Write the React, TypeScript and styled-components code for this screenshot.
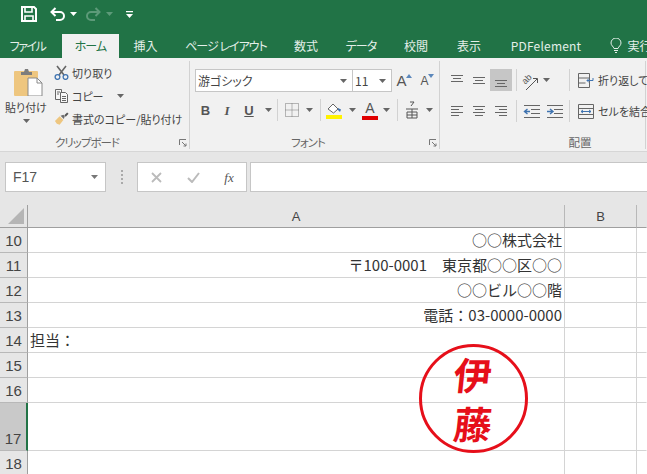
import React from 'react';
import styled, { createGlobalStyle } from 'styled-components';

const GlobalStyle = createGlobalStyle`
	html, body {
		margin: 0;
		padding: 0;
		background: #fff;
	}
	body {
		width: 647px;
		height: 474px;
		overflow: hidden;
		font-family: 'Noto Sans CJK JP', 'Noto Sans', sans-serif;
		color: #444;
	}
`;

const Window = styled.div`
	width: 647px;
	height: 474px;
	overflow: hidden;
	display: flex;
	flex-direction: column;
`;

// ---- title bar + tabs
const QuickBar = styled.div`
	height: 34px;
	background: #217346;
	display: flex;
	align-items: center;
	padding-left: 21px;
	padding-bottom: 6px;
	box-sizing: border-box;
`;

const QuickItem = styled.div<{ $w: number }>`
	width: ${({ $w }) => $w}px;
	display: flex;
	align-items: center;
	flex: none;
`;

const TabBar = styled.div`
	height: 24px;
	background: #217346;
	display: flex;
`;

const Tab = styled.div<{ $w: number; $active?: boolean; $gap?: number; $ls?: number }>`
	width: ${({ $w }) => $w}px;
	margin-left: ${({ $gap }) => $gap || 0}px;
	flex: none;
	display: flex;
	align-items: center;
	justify-content: center;
	gap: 5px;
	font-size: 12px;
	font-feature-settings: 'palt' 1;
	letter-spacing: ${({ $ls }) => $ls || 0}px;
	padding-bottom: 2px;
	box-sizing: border-box;
	white-space: nowrap;
	color: ${({ $active }) => ($active ? '#217346' : '#e4efe9')};
	background: ${({ $active }) => ($active ? '#f1f1f1' : 'transparent')};
`;

// ---- ribbon
const Ribbon = styled.div`
	height: 94px;
	background: #f1f1f1;
	display: flex;
	border-bottom: 1px solid #d6d6d6;
	box-sizing: border-box;
`;

const Group = styled.div<{ $w: number }>`
	width: ${({ $w }) => $w}px;
	flex: none;
	display: flex;
	flex-direction: column;
	position: relative;
	box-sizing: border-box;
`;

const GroupBody = styled.div`
	flex: 1;
	display: flex;
	margin-right: 1px;
	margin-top: 3px;
	margin-bottom: 2px;
	border-right: 1px solid #d2d2d2;
`;

const GroupLabel = styled.div<{ $l?: number; $r?: number; $ls?: number }>`
	position: absolute;
	left: ${({ $l }) => $l || 0}px;
	right: ${({ $r }) => $r || 0}px;
	bottom: 1px;
	height: 16px;
	line-height: 16px;
	font-size: 11.5px;
	font-feature-settings: 'palt' 1;
	letter-spacing: ${({ $ls }) => $ls || 0}px;
	color: #666;
	text-align: center;
`;

const Launcher = styled.svg`
	position: absolute;
	right: 4px;
	bottom: 4px;
`;

const PasteColumn = styled.div`
	width: 54px;
	padding-left: 5px;
	box-sizing: border-box;
	display: flex;
	flex-direction: column;
	align-items: flex-start;
`;

const PasteText = styled.div`
	font-size: 11px;
	font-feature-settings: 'palt' 1;
	color: #444;
	line-height: 14px;
	margin-top: 4px;
	white-space: nowrap;
`;

const Nudge = styled.div<{ $ml?: number; $mt?: number }>`
	margin-left: ${({ $ml }) => $ml || 0}px;
	margin-top: ${({ $mt }) => $mt || 0}px;
	display: flex;
	flex: none;
`;

const SmallColumn = styled.div`
	display: flex;
	flex-direction: column;
`;

const SmallRow = styled.div`
	height: 23px;
	display: flex;
	align-items: center;
	gap: 3px;
	font-size: 11px;
	font-feature-settings: 'palt' 1;
	color: #444;
	white-space: nowrap;
`;

const FontColumn = styled.div`
	display: flex;
	flex-direction: column;
	padding: 8px 0 0 4px;
`;

const ToolRow = styled.div<{ $mt?: number }>`
	display: flex;
	align-items: center;
	margin-top: ${({ $mt }) => $mt || 0}px;
`;

const SelectBox = styled.div<{ $w: number }>`
	width: ${({ $w }) => $w}px;
	height: 23px;
	background: #fff;
	border: 1px solid #c6c6c6;
	box-sizing: border-box;
	margin-right: -1px;
	padding: 0 5px 0 2px;
	display: flex;
	align-items: center;
	justify-content: space-between;
	font-size: 12px;
	font-feature-settings: 'palt' 1;
	color: #444;
`;

const Tool = styled.div<{ $w: number; $on?: boolean }>`
	width: ${({ $w }) => $w}px;
	height: 22px;
	flex: none;
	display: flex;
	align-items: center;
	justify-content: center;
	background: ${({ $on }) => ($on ? '#c6c6c6' : 'transparent')};
`;

const Letter = styled.span<{ $size?: number; $italic?: boolean; $under?: boolean; $serif?: boolean; $light?: boolean }>`
	font-family: ${({ $serif }) => ($serif ? "'Liberation Serif', serif" : "'Liberation Sans', sans-serif")};
	font-size: ${({ $size }) => $size || 13}px;
	font-weight: ${({ $light }) => ($light ? 400 : 700)};
	font-style: ${({ $italic }) => ($italic ? 'italic' : 'normal')};
	text-decoration: ${({ $under }) => ($under ? 'underline' : 'none')};
	color: #555;
	line-height: 1;
`;

const SizeTriangle = styled.svg`
	align-self: flex-start;
	margin-top: 4px;
	margin-left: -1px;
`;

const ToolSep = styled.div`
	width: 1px;
	height: 22px;
	background: #d2d2d2;
	flex: none;
`;

const WrapText = styled.div`
	font-size: 11px;
	font-feature-settings: 'palt' 1;
	color: #444;
	margin-left: 4px;
	white-space: nowrap;
`;

// ---- formula bar
const FormulaBar = styled.div`
	height: 53px;
	background: #e6e6e6;
	padding: 10px 0 0 5px;
	box-sizing: border-box;
	display: flex;
	align-items: flex-start;
`;

const NameBox = styled.div`
	width: 101px;
	height: 30px;
	background: #fff;
	border: 1px solid #c6c6c6;
	box-sizing: border-box;
	display: flex;
	align-items: center;
	justify-content: space-between;
	padding: 0 7px 0 7px;
	font-size: 14px;
	color: #555;
	font-family: 'Liberation Sans', sans-serif;
`;

const Dots = styled.div`
	width: 31px;
	height: 30px;
	flex: none;
	display: flex;
	flex-direction: column;
	align-items: center;
	justify-content: center;
	gap: 2px;
	& > i {
		width: 2px;
		height: 2px;
		background: #aaa;
	}
`;

const FxBox = styled.div`
	width: 110px;
	height: 30px;
	background: #fff;
	border: 1px solid #c6c6c6;
	box-sizing: border-box;
	display: flex;
	align-items: center;
	flex: none;
	margin-right: 3px;
`;

const FormulaInput = styled.div`
	flex: 1;
	height: 30px;
	background: #fff;
	border: 1px solid #c6c6c6;
	border-right: none;
	box-sizing: border-box;
`;

// ---- sheet
const Sheet = styled.div`
	position: relative;
	flex: 1;
	display: grid;
	grid-template-columns: 28px 537px 72px 1fr;
	grid-auto-rows: min-content;
	background: #fff;
	overflow: hidden;
`;

const Corner = styled.div`
	height: 23px;
	background: #e6e6e6;
	border-right: 1px solid #9f9f9f;
	border-bottom: 1px solid #9f9f9f;
	box-sizing: border-box;
	position: relative;
`;

const CornerMark = styled.div`
	position: absolute;
	right: 3px;
	bottom: 3px;
	width: 0;
	height: 0;
	border-left: 16px solid transparent;
	border-bottom: 16px solid #b5b5b5;
`;

const ColHead = styled.div<{ $blank?: boolean }>`
	height: 23px;
	background: #e6e6e6;
	border-right: 1px solid ${({ $blank }) => ($blank ? 'transparent' : '#b8b8b8')};
	border-bottom: 1px solid #9f9f9f;
	box-sizing: border-box;
	display: flex;
	align-items: center;
	justify-content: center;
	font-family: 'Liberation Sans', sans-serif;
	font-size: 13px;
	color: #444;
`;

const RowHead = styled.div<{ $h: number; $selected?: boolean }>`
	height: ${({ $h }) => $h}px;
	background: ${({ $selected }) => ($selected ? '#c9c9c9' : '#e6e6e6')};
	border-right: ${({ $selected }) => ($selected ? '2px solid #217346' : '1px solid #9f9f9f')};
	border-bottom: 1px solid #b8b8b8;
	box-sizing: border-box;
	display: flex;
	align-items: flex-end;
	justify-content: center;
	font-family: 'Liberation Sans', sans-serif;
	font-size: 15px;
	line-height: 23px;
	color: #444;
`;

const Cell = styled.div<{ $h: number; $right?: boolean; $noRight?: boolean }>`
	height: ${({ $h }) => $h}px;
	border-right: 1px solid ${({ $noRight }) => ($noRight ? 'transparent' : '#d4d4d4')};
	border-bottom: 1px solid #d4d4d4;
	box-sizing: border-box;
	display: flex;
	align-items: flex-end;
	justify-content: ${({ $right }) => ($right ? 'flex-end' : 'flex-start')};
	padding: 0 2px 1px;
	font-size: 15px;
	line-height: 23px;
	color: #333;
	white-space: pre;
`;

// stamp sits over the grid, lines show through it
const Stamp = styled.div`
	position: absolute;
	left: 419px;
	top: 139px;
	width: 109px;
	height: 109px;
	border: 3px solid #e60f1a;
	border-radius: 50%;
	box-sizing: border-box;
	display: flex;
	flex-direction: column;
	align-items: center;
	justify-content: center;
	gap: 11px;
`;

const StampChar = styled.div`
	font-size: 38px;
	font-weight: 700;
	line-height: 38px;
	color: #e60f1a;
	font-family: 'Noto Sans CJK JP', sans-serif;
	transform: skewX(-6deg);
`;

const Caret = ({ c = '#666' }: { c?: string }) => (
	<svg width="7" height="4" viewBox="0 0 7 4">
		<path d="M0 0h7L3.5 4z" fill={c} />
	</svg>
);

const SaveIcon = () => (
	<svg width="16" height="16" viewBox="0 0 16 16" fill="none" stroke="#fff" strokeWidth="2">
		<path d="M1 1h12l2 2v12H1z" />
		<path d="M4 1v5h7V1M4 15V10h8v5" strokeWidth="1.6" />
	</svg>
);

const UndoIcon = ({ c }: { c: string }) => (
	<svg width="16" height="14" viewBox="0 0 16 14" fill="none" stroke={c} strokeWidth="2">
		<path d="M1.5 5H10a4 4 0 0 1 0 8H6" />
		<path d="M5.5 1L1.500 5l4 4" />
	</svg>
);

const RedoIcon = ({ c }: { c: string }) => (
	<svg width="16" height="14" viewBox="0 0 16 14" fill="none" stroke={c} strokeWidth="2">
		<path d="M14.5 5H6a4 4 0 0 0 0 8h4" />
		<path d="M10.5 1l4 4-4 4" />
	</svg>
);

const CustomizeIcon = () => (
	<svg width="7" height="7" viewBox="0 0 7 7">
		<path d="M0 0h7v1.2H0zM0 3h7L3.5 7z" fill="#fff" />
	</svg>
);

const BulbIcon = () => (
	<svg width="12" height="15" viewBox="0 0 12 15" fill="none" stroke="#e4efe9" strokeWidth="1">
		<path d="M4 10.5C3.5 8.5 1 7.5 1 5a5 5 0 0 1 10 0c0 2.5-2.5 3.500-3 5.500zM4 12.500h4M5 14.500h2" />
	</svg>
);

const PasteIcon = () => (
	<svg width="30" height="28" viewBox="0 0 30 28">
		<rect x="0" y="3" width="24" height="25" rx="1" fill="#eec67f" />
		<path d="M7 4h3l1-3h3l1 3h3v3H7z" fill="#7d7d7d" />
		<path d="M14 10h9l5 5v13H14z" fill="#fff" stroke="#8a8a8a" />
		<path d="M23 10v5h5" fill="none" stroke="#8a8a8a" />
	</svg>
);

const ScissorsIcon = () => (
	<svg width="15" height="15" viewBox="0 0 15 15" fill="none">
		<path d="M3 1l7 9M12 1l-7 9" stroke="#666" strokeWidth="1.6" />
		<circle cx="3.500" cy="12" r="2.400" stroke="#3f73b0" strokeWidth="1.300" />
		<circle cx="11.500" cy="12" r="2.400" stroke="#3f73b0" strokeWidth="1.300" />
	</svg>
);

const CopyIcon = () => (
	<svg width="15" height="15" viewBox="0 0 15 15" fill="#f6f6f6" stroke="#666">
		<path d="M1.500 1.500h6v10h-6z" />
		<path d="M6.500 4.500h5l2 2v8h-7z" />
		<path d="M8 8.500h4M8 10.500h4M8 12.500h4M3 4h3M3 6h2" fill="none" />
	</svg>
);

const BrushIcon = () => (
	<svg width="15" height="14" viewBox="0 0 16 14">
		<path d="M1 9l5-5 4 4-4 5-3-1z" fill="#eec67f" />
		<path d="M7 3.500l3-1 1.500 1.500-1 3z" fill="#6d6d6d" />
		<path d="M11 3l3-3 1.500 1.500-3 3z" fill="#555" />
	</svg>
);

const LauncherIcon = () => (
	<Launcher width="8" height="8" viewBox="0 0 8 8" fill="none" stroke="#777">
		<path d="M0.500 6V0.500H7" />
		<path d="M3 3l4 4M7 4.500V7H4.500" />
	</Launcher>
);

const SizeMark = ({ up }: { up: boolean }) => (
	<SizeTriangle width="6" height="4" viewBox="0 0 6 4">
		<path d={up ? 'M0 4l3-4 3 4z' : 'M0 0l3 4 3-4z'} fill="#5b87bb" />
	</SizeTriangle>
);

const BorderIcon = () => (
	<svg width="14" height="14" viewBox="0 0 14 14" stroke="#777" strokeDasharray="1 1" fill="none">
		<path d="M.5.5h13v13H.5zM7 .5v13M.5 7h13" />
	</svg>
);

const FillIcon = () => (
	<svg width="17" height="18" viewBox="0 0 17 18">
		<path d="M2 8l5-5 5 5-4.500 4z" fill="#fff" stroke="#666" />
		<path d="M12 7l3 1.500-1 2.500-2-2z" fill="#3f73b0" />
		<rect x="0" y="14" width="16" height="4" fill="#fff200" />
	</svg>
);

const ColorBar = styled.div`
	display: flex;
	flex-direction: column;
	align-items: center;
	width: 16px;
	line-height: 1;
	& > i {
		width: 16px;
		height: 4px;
		background: #e00000;
		margin-top: 1px;
	}
`;

const PhoneticIcon = () => (
	<svg width="14" height="18" viewBox="0 0 14 18" fill="none" stroke="#555">
		<path d="M5 1h4L6 5M1 8h12M2 11h10v6H2zM7 8v9M2 14h10" />
	</svg>
);

const Lines = ({ rows }: { rows: number[][] }) => (
	<svg width="14" height="14" viewBox="0 0 14 14" stroke="#666" fill="none">
		{rows.map(([y, a, b]) => (
			<path key={y} d={`M${a} ${y}.5H${b}`} />
		))}
	</svg>
);

const OrientLabel = styled.span`
	position: absolute;
	left: 0;
	top: 3px;
	font-family: 'Liberation Sans', sans-serif;
	font-size: 9px;
	line-height: 9px;
	color: #555;
	transform: rotate(-45deg);
`;

const OrientWrap = styled.div`
	position: relative;
	width: 16px;
	height: 16px;
`;

const OrientIcon = () => (
	<OrientWrap>
		<OrientLabel>ab</OrientLabel>
		<svg width="16" height="16" viewBox="0 0 16 16" fill="none">
			<path d="M4 15L15 4M11 3.500h4.500V8" stroke="#555" strokeWidth="1" />
		</svg>
	</OrientWrap>
);

const IndentIcon = ({ flip }: { flip?: boolean }) => (
	<svg width="17" height="13" viewBox="0 0 17 13" fill="none">
		<path d="M1 .5h16M8 4.500h9M8 8.500h9M1 12.500h16" stroke="#666" />
		<path d={flip ? 'M1 6.500h5M4 4l3 2.500L4 9' : 'M7 6.500H2M4.500 4L1.500 6.500 4.500 9'} stroke="#3f73b0" strokeWidth="1.400" />
	</svg>
);

const WrapIcon = () => (
	<svg width="16" height="15" viewBox="0 0 16 15" fill="none" stroke="#666">
		<path d="M.5.5h11v14H.5zM.5 5h11M.5 10h7" />
		<path d="M15 5v2.500H9M11 5.500L9 7.500l2 2" stroke="#3f73b0" />
	</svg>
);

const MergeIcon = () => (
	<svg width="16" height="15" viewBox="0 0 16 15" fill="none" stroke="#666">
		<path d="M.5.5h15v14H.5zM.5 4.500h15M.5 10.500h15" />
		<path d="M3 7.500h10M5 6L3 7.500 5 9M11 6l2 1.500L11 9" stroke="#3f73b0" />
	</svg>
);

const CloseIcon = () => (
	<svg width="11" height="11" viewBox="0 0 11 11" stroke="#bbb" strokeWidth="1.800">
		<path d="M1 1l9 9M10 1l-9 9" />
	</svg>
);

const CheckIcon = () => (
	<svg width="13" height="11" viewBox="0 0 13 11" stroke="#bbb" strokeWidth="2" fill="none">
		<path d="M1 6l4 4 7-9" />
	</svg>
);

const rows = [
	{ n: '10', h: 25, text: '○○株式会社', right: true },
	{ n: '11', h: 25, text: '〒100-0001　東京都○○区○○', right: true },
	{ n: '12', h: 25, text: '○○ビル○○階', right: true },
	{ n: '13', h: 25, text: '電話：03-0000-0000', right: true },
	{ n: '14', h: 25, text: '担当：', right: false },
	{ n: '15', h: 25, text: '', right: false },
	{ n: '16', h: 25, text: '', right: false },
	{ n: '17', h: 48, text: '', right: false, selected: true },
	{ n: '18', h: 25, text: '', right: false },
];

function App() {
	return (
		<Window>
			<GlobalStyle />
			<QuickBar>
				<QuickItem $w={29}>
					<SaveIcon />
				</QuickItem>
				<QuickItem $w={20}>
					<UndoIcon c="#fff" />
				</QuickItem>
				<QuickItem $w={15}>
					<Caret c="#fff" />
				</QuickItem>
				<QuickItem $w={21}>
					<RedoIcon c="#5d9a79" />
				</QuickItem>
				<QuickItem $w={20}>
					<Caret c="#5d9a79" />
				</QuickItem>
				<QuickItem $w={10}>
					<CustomizeIcon />
				</QuickItem>
			</QuickBar>
			<TabBar>
				<Tab $w={55} $ls={-1.5}>
					ファイル
				</Tab>
				<Tab $w={57} $gap={7} $ls={-1} $active>
					ホーム
				</Tab>
				<Tab $w={53}>挿入</Tab>
				<Tab $w={108} $ls={-1}>
					ページ レイアウト
				</Tab>
				<Tab $w={52}>数式</Tab>
				<Tab $w={58} $ls={-1}>
					データ
				</Tab>
				<Tab $w={52}>校閲</Tab>
				<Tab $w={54}>表示</Tab>
				<Tab $w={100} $ls={0.2}>
					PDFelement
				</Tab>
				<Tab $w={70}>
					<BulbIcon />
					実行
				</Tab>
			</TabBar>
			<Ribbon>
				<Group $w={191}>
					<GroupBody>
						<PasteColumn>
							<Nudge $ml={9} $mt={7}>
								<PasteIcon />
							</Nudge>
							<PasteText>貼り付け</PasteText>
							<Nudge $ml={18} $mt={5}>
								<Caret />
							</Nudge>
						</PasteColumn>
						<SmallColumn>
							<SmallRow>
								<ScissorsIcon />
								切り取り
							</SmallRow>
							<SmallRow>
								<CopyIcon />
								コピー
								<Nudge $ml={10}>
									<Caret />
								</Nudge>
							</SmallRow>
							<SmallRow>
								<BrushIcon />
								書式のコピー/貼り付け
							</SmallRow>
						</SmallColumn>
					</GroupBody>
					<GroupLabel $r={17} $ls={-1}>
						クリップボード
					</GroupLabel>
					<LauncherIcon />
				</Group>
				<Group $w={250}>
					<GroupBody>
						<FontColumn>
							<ToolRow>
								<SelectBox $w={158}>
									游ゴシック
									<Caret />
								</SelectBox>
								<SelectBox $w={40}>
									11
									<Caret />
								</SelectBox>
								<Tool $w={26}>
									<Letter $size={15} $light>
										A
									</Letter>
									<SizeMark up />
								</Tool>
								<Tool $w={20}>
									<Letter $size={12} $light>
										A
									</Letter>
									<SizeMark up={false} />
								</Tool>
							</ToolRow>
							<ToolRow $mt={7}>
								<Tool $w={21}>
									<Letter $size={13}>B</Letter>
								</Tool>
								<Tool $w={22}>
									<Letter $size={13} $italic $serif>
										I
									</Letter>
								</Tool>
								<Tool $w={22}>
									<Letter $size={13} $under>
										U
									</Letter>
								</Tool>
								<Tool $w={17}>
									<Caret />
								</Tool>
								<ToolSep />
								<Tool $w={28}>
									<BorderIcon />
								</Tool>
								<Tool $w={7}>
									<Caret />
								</Tool>
								<Nudge $ml={7}>
									<ToolSep />
								</Nudge>
								<Tool $w={27}>
									<FillIcon />
								</Tool>
								<Tool $w={9}>
									<Caret />
								</Tool>
								<Tool $w={26}>
									<ColorBar>
										<Letter $size={14} $light>
											A
										</Letter>
										<i />
									</ColorBar>
								</Tool>
								<Tool $w={7}>
									<Caret />
								</Tool>
								<Nudge $ml={7}>
									<ToolSep />
								</Nudge>
								<Tool $w={28}>
									<PhoneticIcon />
								</Tool>
								<Tool $w={7}>
									<Caret />
								</Tool>
							</ToolRow>
						</FontColumn>
					</GroupBody>
					<GroupLabel $r={16} $ls={-1}>
						フォント
					</GroupLabel>
					<LauncherIcon />
				</Group>
				<Group $w={206}>
					<GroupBody>
						<FontColumn>
							<ToolRow>
								<Nudge $ml={1}>
									<Tool $w={22}>
										<Lines rows={[[2, 1, 13], [5, 3, 11], [8, 1, 13]]} />
									</Tool>
								</Nudge>
								<Tool $w={22}>
									<Lines rows={[[4, 1, 13], [7, 3, 11], [10, 1, 13]]} />
								</Tool>
								<Tool $w={22} $on>
									<Lines rows={[[7, 1, 13], [10, 3, 11], [13, 1, 13]]} />
								</Tool>
								<Nudge $ml={4}>
									<ToolSep />
								</Nudge>
								<Tool $w={26}>
									<OrientIcon />
								</Tool>
								<Tool $w={7}>
									<Caret />
								</Tool>
								<Nudge $ml={19}>
									<ToolSep />
								</Nudge>
								<Nudge $ml={8}>
									<WrapIcon />
								</Nudge>
								<WrapText>折り返して全体を表示する</WrapText>
							</ToolRow>
							<ToolRow $mt={9}>
								<Nudge $ml={1}>
									<Tool $w={22}>
										<Lines rows={[[2, 1, 13], [5, 1, 9], [8, 1, 13], [11, 1, 9]]} />
									</Tool>
								</Nudge>
								<Tool $w={22}>
									<Lines rows={[[2, 1, 13], [5, 3, 11], [8, 1, 13], [11, 3, 11]]} />
								</Tool>
								<Tool $w={22}>
									<Lines rows={[[2, 1, 13], [5, 5, 13], [8, 1, 13], [11, 5, 13]]} />
								</Tool>
								<Nudge $ml={4}>
									<ToolSep />
								</Nudge>
								<Nudge $ml={3}>
									<Tool $w={23}>
										<IndentIcon />
									</Tool>
								</Nudge>
								<Tool $w={22}>
									<IndentIcon flip />
								</Tool>
								<Nudge $ml={4}>
									<ToolSep />
								</Nudge>
								<Nudge $ml={8}>
									<MergeIcon />
								</Nudge>
								<WrapText>セルを結合して中央揃え</WrapText>
							</ToolRow>
						</FontColumn>
					</GroupBody>
					<GroupLabel $l={72}>配置</GroupLabel>
				</Group>
			</Ribbon>
			<FormulaBar>
				<NameBox>
					F17
					<Caret c="#777" />
				</NameBox>
				<Dots>
					<i />
					<i />
					<i />
					<i />
				</Dots>
				<FxBox>
					<Tool $w={36}>
						<CloseIcon />
					</Tool>
					<Tool $w={38}>
						<CheckIcon />
					</Tool>
					<Tool $w={34}>
						<Letter $size={13} $italic $serif $light>
							fx
						</Letter>
					</Tool>
				</FxBox>
				<FormulaInput />
			</FormulaBar>
			<Sheet>
				<Corner>
					<CornerMark />
				</Corner>
				<ColHead>A</ColHead>
				<ColHead>B</ColHead>
				<ColHead $blank />
				{rows.map((r) => (
					<React.Fragment key={r.n}>
						<RowHead $h={r.h} $selected={r.selected}>
							{r.n}
						</RowHead>
						<Cell $h={r.h} $right={r.right}>
							{r.text}
						</Cell>
						<Cell $h={r.h} />
						<Cell $h={r.h} $noRight />
					</React.Fragment>
				))}
				<Stamp>
					<StampChar>伊</StampChar>
					<StampChar>藤</StampChar>
				</Stamp>
			</Sheet>
		</Window>
	);
}

export default App;
